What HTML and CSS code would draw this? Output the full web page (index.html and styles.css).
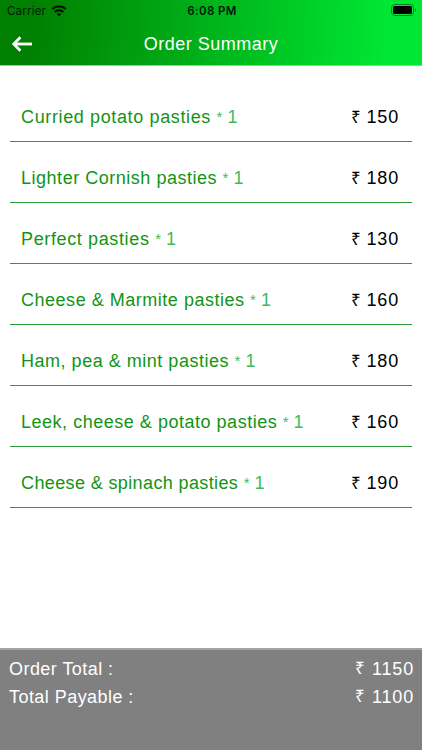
FILE: index.html
```html
<!DOCTYPE html>
<html lang="en">
<head>
    <meta charset="UTF-8">
    <meta name="viewport" content="width=device-width, initial-scale=1.0">
    <title>Order Summary</title>
    <link rel="stylesheet" href="styles.css">
</head>
<body>
    <header class="header">
        <div class="status-bar">
            <div class="carrier">
                <span>Carrier</span>
                <svg width="16" height="12" viewBox="0 0 16 12" fill="none" stroke="#031803" stroke-width="2.3">
                    <path d="M1.2 4.2a9.8 9.8 0 0 1 13.6 0"/>
                    <path d="M3.7 7a6.2 6.2 0 0 1 8.6 0"/>
                    <path d="M8 11.5L5.7 9.1a3.3 3.3 0 0 1 4.6 0z" fill="#031803" stroke="none"/>
                </svg>
            </div>
            <span class="time">6:08 PM</span>
            <svg class="battery" width="26" height="12" viewBox="0 0 26 12">
                <rect x="0.5" y="0.5" width="22" height="11" rx="3" fill="none" stroke="#087d20"/>
                <rect x="2" y="2" width="19" height="8" rx="1.6" fill="#000"/>
                <path d="M24 4v4c1.4-.6 1.4-3.4 0-4z" fill="#087d20"/>
            </svg>
        </div>
        <div class="nav">
            <svg class="back" width="22" height="16" viewBox="0 0 22 16" fill="none" stroke="#fff" stroke-width="2.8">
                <path d="M21 8H3"/>
                <path d="M9.4 1.2L2.8 8l6.6 6.8"/>
            </svg>
            <h1 class="title">Order Summary</h1>
        </div>
    </header>

    <main class="items">
        <div class="item"><span class="name wide">Curried potato pasties <span class="qty"><span class="star">*</span> 1</span></span><span class="price"><span class="rupee">₹</span>150</span></div>
        <div class="item"><span class="name">Lighter Cornish pasties <span class="qty"><span class="star">*</span> 1</span></span><span class="price"><span class="rupee">₹</span>180</span></div>
        <div class="item"><span class="name wide">Perfect pasties <span class="qty"><span class="star">*</span> 1</span></span><span class="price"><span class="rupee">₹</span>130</span></div>
        <div class="item"><span class="name">Cheese &amp; Marmite pasties <span class="qty"><span class="star">*</span> 1</span></span><span class="price"><span class="rupee">₹</span>160</span></div>
        <div class="item"><span class="name">Ham, pea &amp; mint pasties <span class="qty"><span class="star">*</span> 1</span></span><span class="price"><span class="rupee">₹</span>180</span></div>
        <div class="item"><span class="name">Leek, cheese &amp; potato pasties <span class="qty"><span class="star">*</span> 1</span></span><span class="price"><span class="rupee">₹</span>160</span></div>
        <div class="item"><span class="name narrow">Cheese &amp; spinach pasties <span class="qty"><span class="star">*</span> 1</span></span><span class="price"><span class="rupee">₹</span>190</span></div>
    </main>

    <footer class="totals">
        <div class="total"><span>Order Total :</span><span class="price"><span class="rupee">₹</span>1150</span></div>
        <div class="total"><span>Total Payable :</span><span class="price"><span class="rupee">₹</span>1100</span></div>
    </footer>
</body>
</html>
```
FILE: styles.css
```css
* {
    box-sizing: border-box;
}
body {
    margin: 0;
    height: 750px;
    display: flex;
    flex-direction: column;
    background: #fff;
    font-family: "Liberation Sans", Arial, sans-serif;
    font-size: 18px;
    overflow: hidden;
}
.header {
    height: 66px;
    flex: none;
    background: linear-gradient(95deg, #008000 8%, #00e835 92%);
    border-bottom: 1px solid #7bdc8b;
}
.status-bar {
    height: 22px;
    display: grid;
    grid-template-columns: 1fr auto 1fr;
    align-items: center;
    padding: 0 5px 0 7px;
    font-family: Inter, sans-serif;
    font-size: 11.5px;
    color: #031803;
}
.carrier {
    display: flex;
    align-items: center;
    gap: 5px;
    letter-spacing: 0.2px;
}
.time {
    font-weight: 600;
    letter-spacing: 0.4px;
}
.battery {
    justify-self: end;
    position: relative;
    top: -1px;
}
.nav {
    height: 43px;
    display: grid;
    grid-template-columns: 1fr auto 1fr;
    align-items: center;
    padding: 0 11px;
}
.title {
    margin: 0;
    padding-top: 1px;
    font-size: 18px;
    font-weight: normal;
    letter-spacing: 0.5px;
    color: #fff;
}
.items {
    flex: 1;
    padding: 15px 10px 0;
}
.item {
    height: 61px;
    display: flex;
    justify-content: space-between;
    padding: 26px 13px 0 11px;
    border-bottom: 1px solid #2c9a35;
    line-height: 21px;
    white-space: nowrap;
}
.name {
    color: #129415;
    letter-spacing: 0.52px;
}
.name.wide {
    letter-spacing: 0.63px;
}
.name.narrow {
    letter-spacing: 0.38px;
}
.qty {
    color: #3cbb5c;
    letter-spacing: 0;
}
.star {
    font-size: 15px;
    position: relative;
    top: -1px;
}
.price {
    display: flex;
    letter-spacing: 0.8px;
}
.item .price {
    color: #000;
}
.rupee {
    font-size: 17px;
    margin-right: 5px;
}
.totals {
    height: 102px;
    flex: none;
    padding: 5px 8px 0 9px;
    background: #808080;
    border-top: 2px solid #a2a2a2;
    color: #fff;
    letter-spacing: 0.45px;
}
.total {
    height: 28px;
    display: flex;
    justify-content: space-between;
    line-height: 28px;
}
.total .rupee {
    margin-right: 6px;
}
```
